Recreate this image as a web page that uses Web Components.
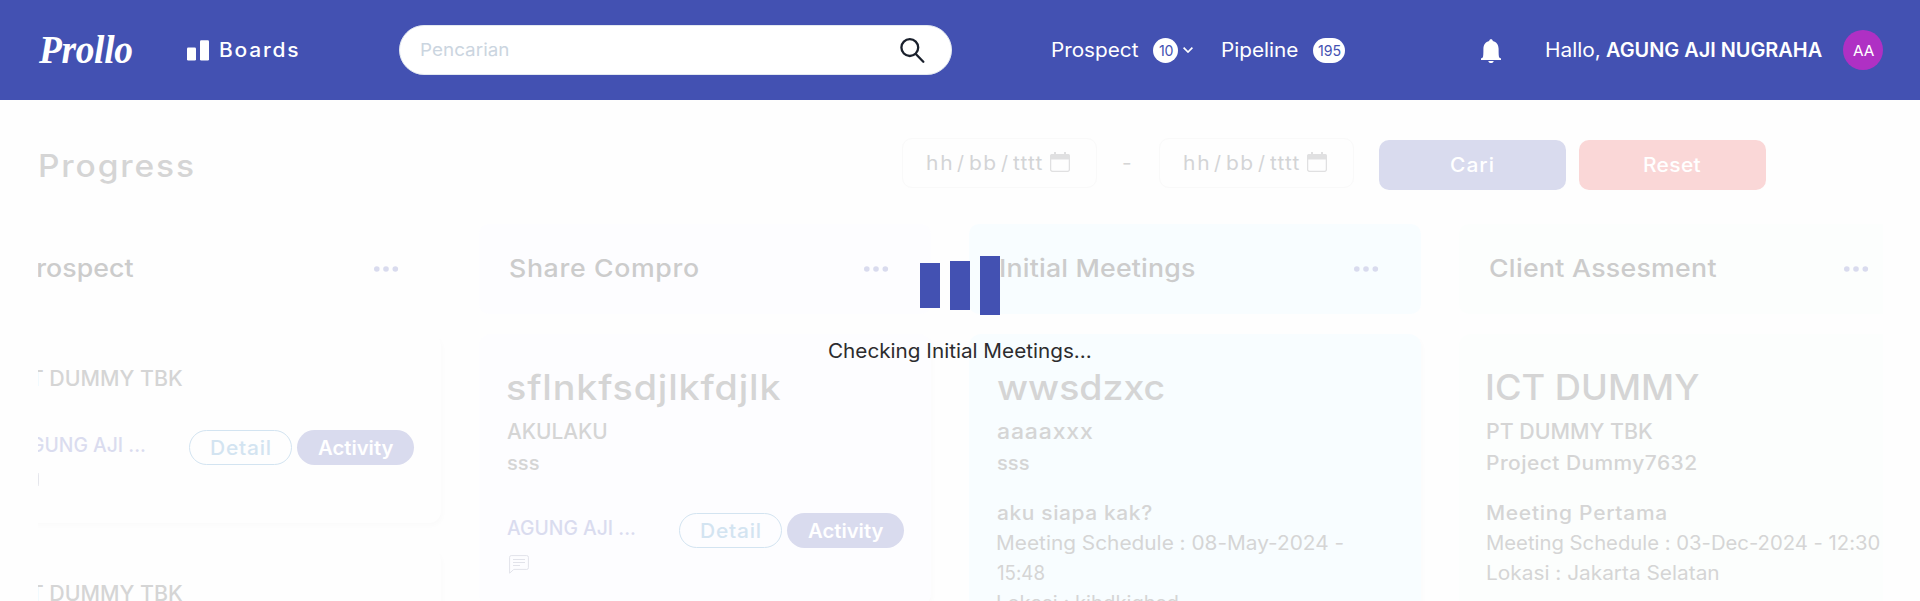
<!DOCTYPE html>
<html lang="id">
<head>
<meta charset="utf-8">
<title>Prollo – Progress</title>
<style>
html,body{margin:0;height:100%;overflow:hidden;background:#fefefe;font-family:Inter,"Open Sans",sans-serif}
</style>
</head>
<body>
<prollo-app></prollo-app>
<script>
const define=(name,html,setup)=>customElements.define(name,class extends HTMLElement{
  constructor(){super();this.attachShadow({mode:'open'})}
  connectedCallback(){
    const t=document.createElement('template');
    t.innerHTML=typeof html==='function'?html(this):html;
    this.shadowRoot.replaceChildren(t.content.cloneNode(true));
    if(setup)setup(this);
  }
});

/* One line of text, widened a little and then tracked so that it spans the width given in w. */
const ctx=document.createElement('canvas').getContext('2d');
define('fit-text',el=>{
  const s=+(el.getAttribute('s')||20)*.97,wt=el.getAttribute('wt')||400,h=el.getAttribute('h')||30,w=+el.getAttribute('w');
  const fam=el.getAttribute('fam')||'Inter',st=el.getAttribute('st')||'normal';
  const txt=el.textContent;
  ctx.font=`${st} ${wt} ${s}px "${fam}"`;
  const m=ctx.measureText(txt);
  const ink=m.actualBoundingBoxLeft+m.actualBoundingBoxRight;
  const k=Math.min(1.08,Math.max(.94,w/ink));
  const ls=(w/k-ink)/Math.max(1,txt.length-1);
  return `<style>:host{display:block;flex:none;width:${w}px;height:${h}px;white-space:pre}
  span{display:block;width:max-content;font:${st} ${wt} ${s}px/${h}px "${fam}",sans-serif;letter-spacing:${ls.toFixed(3)}px;margin-left:${(m.actualBoundingBoxLeft*k).toFixed(2)}px;transform:scaleX(${k.toFixed(4)});transform-origin:0 0;font-variant-ligatures:none}</style><span><slot></slot></span>`;
});

define('count-badge',el=>`<style>:host{display:flex;align-items:center;justify-content:center;flex:none;height:25px;border-radius:13px;background:#fff;color:#4351b2}</style><slot></slot>`);

define('search-box',`<style>:host{display:flex;align-items:center;box-sizing:border-box;width:553px;height:50px;border:1px solid #e2e8f0;border-radius:25px;background:#fff;padding:0 26px 0 21px;color:#cbd5e0;justify-content:space-between}
svg{display:block;width:25px;height:25px}</style>
<fit-text s="18" w="87" h="48">Pencarian</fit-text>
<svg viewBox="0 0 25 25" fill="none" stroke="#1a202c" stroke-width="2.3" stroke-linecap="round"><circle cx="9.8" cy="9.6" r="8.4"/><path d="M15.8 16L23.3 23.7"/></svg>`);

define('top-bar',`<style>:host{display:flex;align-items:center;height:100px;background:#4351b2;color:#fff;padding-left:38px;box-sizing:border-box}
svg{display:block;flex:none}.av{display:flex;align-items:center;justify-content:center;width:40px;height:40px;border-radius:50%;background:#af30c4;margin-left:21px}</style>
<fit-text s="41" w="94" h="98" wt="700" st="italic" fam="Liberation Serif">Prollo</fit-text>
<svg style="margin-left:55px" width="22" height="21" viewBox="0 0 22 21" fill="#fff"><rect y="7.5" width="9" height="13" rx="1.2"/><rect x="13" y=".3" width="9" height="20.2" rx="1.2"/></svg>
<fit-text style="margin-left:11px" w="78" wt="500">Boards</fit-text>
<search-box style="margin-left:101px"></search-box>
<fit-text style="margin-left:100px" w="86">Prospect</fit-text>
<count-badge style="margin-left:15px;width:25px;"><fit-text s="15.500" w="14" h="25">10</fit-text></count-badge>
<svg style="margin-left:5px" width="10" height="6" viewBox="0 0 10 6" fill="none" stroke="#fff" stroke-width="1.7"><path d="M.6.7L5 5L9.4.7"/></svg>
<fit-text style="margin-left:29px" w="76">Pipeline</fit-text>
<count-badge style="margin-left:15px;width:32px"><fit-text s="15.500" w="23" h="25">195</fit-text></count-badge>
<svg style="margin-left:136px;margin-top:2px" width="20" height="24" viewBox="0 0 20 24" fill="#fff"><path d="M8.2 2C8.2-.5 11.8-.5 11.8 2C15.5 2.8 17.6 6 17.6 9.800C17.600 14.500 17.700 17.200 18.200 18.500L20 19.600V21H0V19.600L1.800 18.500C2.300 17.200 2.400 14.500 2.400 9.800C2.400 6 4.500 2.800 8.200 2ZM7.200 22H12.800Q12 24.200 10 24.200Q8 24.200 7.200 22Z"/></svg>
<fit-text style="margin-left:45px" w="53">Hallo,</fit-text>
<fit-text style="margin-left:7px" w="216" wt="600">AGUNG AJI NUGRAHA</fit-text>
<div class="av"><fit-text s="15.500" w="21" h="41">AA</fit-text></div>`);

define('date-field',`<style>:host{display:flex;box-sizing:border-box;flex:none;width:195px;height:50px;border:1px solid #f9f9f9;border-radius:10px;background:#fefefe;color:#d3d4d6;padding:9px 0 0 24px}
svg{display:block;margin:4px 0 0 8px}</style>
<fit-text w="24">hh</fit-text><fit-text style="margin-left:6px" w="7">/</fit-text><fit-text style="margin-left:6px" w="25">bb</fit-text><fit-text style="margin-left:6px" w="7">/</fit-text><fit-text style="margin-left:5px" w="29">tttt</fit-text>
<svg width="20" height="20" viewBox="0 0 20 20"><rect x=".6" y="2.600" width="18.800" height="16.800" rx="2" fill="none" stroke="#e0e0e1" stroke-width="1.300"/><path fill="#e0e0e1" d="M0 7.500V4Q0 2 2 2H4V0H6V2H14V0H16V2H18Q20 2 20 4V7.500Z"/></svg>`);

define('action-button',`<style>:host{display:flex;align-items:center;justify-content:center;flex:none;width:187px;height:50px;border-radius:10px;background:var(--bg);color:#fff}</style><slot></slot>`);

define('filter-bar',`<style>:host{display:flex;height:124px;box-sizing:border-box;padding:38px 0 0 40px;color:#d5d5d5}</style>
<fit-text style="margin-top:3px" s="32" w="153" h="50" wt="500">Progress</fit-text>
<date-field style="margin-left:709px"></date-field>
<fit-text style="margin:10px 0 0 26px" w="9">-</fit-text>
<date-field style="margin-left:27px"></date-field>
<action-button style="--bg:#d9dbee;margin:2px 0 0 25px"><fit-text w="42" wt="500">Cari</fit-text></action-button>
<action-button style="--bg:#fad7d7;margin:2px 0 0 13px"><fit-text w="57" wt="500">Reset</fit-text></action-button>`);

define('board-column',`<style>:host{display:flex;flex-direction:column;flex:none;width:452px}
header{display:flex;flex:none;align-items:center;justify-content:space-between;box-sizing:border-box;height:90px;border-radius:10px;background:var(--tint);color:#ccc;padding:0 42px 0 31px;margin-bottom:20px}
::slotted([slot=title]){margin-bottom:2px}
svg{display:block}.cards{display:flex;flex-direction:column;gap:26px}</style>
<header><slot name="title"></slot><svg width="25" height="6" viewBox="0 0 25 6" fill="#d9dbee"><circle cx="2.800" cy="3" r="2.800"/><circle cx="12" cy="3" r="2.800"/><circle cx="21.300" cy="3" r="2.800"/></svg></header>
<div class="cards"><slot></slot></div>`);

define('deal-card',`<style>:host{display:block;box-sizing:border-box;min-height:189px;border-radius:12px;background:var(--tint);color:#d5d5d5;padding:26px 27px 32px 28px;box-shadow:2px 3px 5px rgba(0,0,0,.015)}</style><slot></slot>`);

define('card-footer',`<style>:host{display:block;margin-top:35px}
.row{display:flex;align-items:flex-start;color:#dadcef}
.pill{display:flex;align-items:center;justify-content:center;box-sizing:border-box;height:35px;border-radius:18px}
.d{width:103px;border:1px solid #d3e4f1;color:#d3e4f1;margin-left:44px}.a{width:117px;background:#d9dbee;color:#fff;margin-left:5px}
svg{display:block;margin:7px 0 0 2px}</style>
<div class="row"><fit-text w="128" wt="500">AGUNG AJI ...</fit-text><div class="pill d"><fit-text w="59" wt="500">Detail</fit-text></div><div class="pill a"><fit-text w="76" wt="600">Activity</fit-text></div></div>
<svg width="20" height="19" viewBox="0 0 20 19" fill="none" stroke="#e2e3ea" stroke-width="1"><path d="M.6 18.200V2.200Q.6.600 2.200.600H17.800Q19.400.600 19.400 2.200V12.800Q19.400 14.400 17.800 14.400H4.800ZM4 4.500H16M4 7.500H16M4 10.500H11"/></svg>`);

define('loading-indicator',`<style>:host{position:absolute;left:0;right:0;top:256px;display:flex;flex-direction:column;align-items:center;color:#2c2c2e}
.bars{display:flex;gap:10px;height:59px;align-items:center}i{display:block;width:20px;background:#4351b2}</style>
<div class="bars"><i style="height:45px"></i><i style="height:49px"></i><i style="height:59px"></i></div>
<fit-text style="margin-top:21px" w="262">Checking Initial Meetings...</fit-text>`);

define('prollo-app',`<style>:host{display:block;position:relative;height:601px;overflow:hidden}
.board{display:flex;gap:38px;width:1845px;height:377px;margin-left:38px;overflow:hidden}
.board>:first-child{margin-left:-49px}.gap{margin-top:20px}</style>
<top-bar></top-bar>
<filter-bar></filter-bar>
<div class="board">
<board-column style="--tint:#fefefe"><fit-text slot="title" s="25.500" w="113" h="88" wt="500">Prospect</fit-text>
<deal-card><fit-text style="margin-top:1px" s="22" h="34" w="166" wt="500">PT DUMMY TBK</fit-text><card-footer></card-footer></deal-card>
<deal-card><fit-text style="margin-top:1px" s="22" h="34" w="166" wt="500">PT DUMMY TBK</fit-text><card-footer></card-footer></deal-card></board-column>
<board-column style="--tint:#fdfdff"><fit-text slot="title" s="25.500" w="188" h="88" wt="500">Share Compro</fit-text>
<deal-card><fit-text s="36" h="54" w="274" wt="500">sflnkfsdjlkfdjlk</fit-text><fit-text s="22" h="34" w="100" wt="500">AKULAKU</fit-text><fit-text w="32" wt="500">sss</fit-text><card-footer></card-footer></deal-card></board-column>
<board-column style="--tint:#f8fdff"><fit-text slot="title" s="25.500" w="195" h="88" wt="500">Initial Meetings</fit-text>
<deal-card><fit-text s="36" h="54" w="167" wt="500">wwsdzxc</fit-text><fit-text s="22" h="34" w="96" wt="500">aaaaxxx</fit-text><fit-text w="32" wt="500">sss</fit-text><fit-text class="gap" w="155" wt="500">aku siapa kak?</fit-text><fit-text w="346">Meeting Schedule : 08-May-2024 -</fit-text><fit-text w="47">15:48</fit-text><fit-text w="181">Lokasi : kjhdkjghsd</fit-text></deal-card></board-column>
<board-column style="--tint:#fcfefd"><fit-text slot="title" s="25.500" w="226" h="88" wt="500">Client Assesment</fit-text>
<deal-card><fit-text s="36" h="54" w="212" wt="500">ICT DUMMY</fit-text><fit-text s="22" h="34" w="166" wt="500">PT DUMMY TBK</fit-text><fit-text w="209" wt="500">Project Dummy7632</fit-text><fit-text class="gap" w="179" wt="500">Meeting Pertama</fit-text><fit-text w="393">Meeting Schedule : 03-Dec-2024 - 12:30</fit-text><fit-text w="231">Lokasi : Jakarta Selatan</fit-text></deal-card></board-column>
</div>
<loading-indicator></loading-indicator>`);
</script>
</body>
</html>
